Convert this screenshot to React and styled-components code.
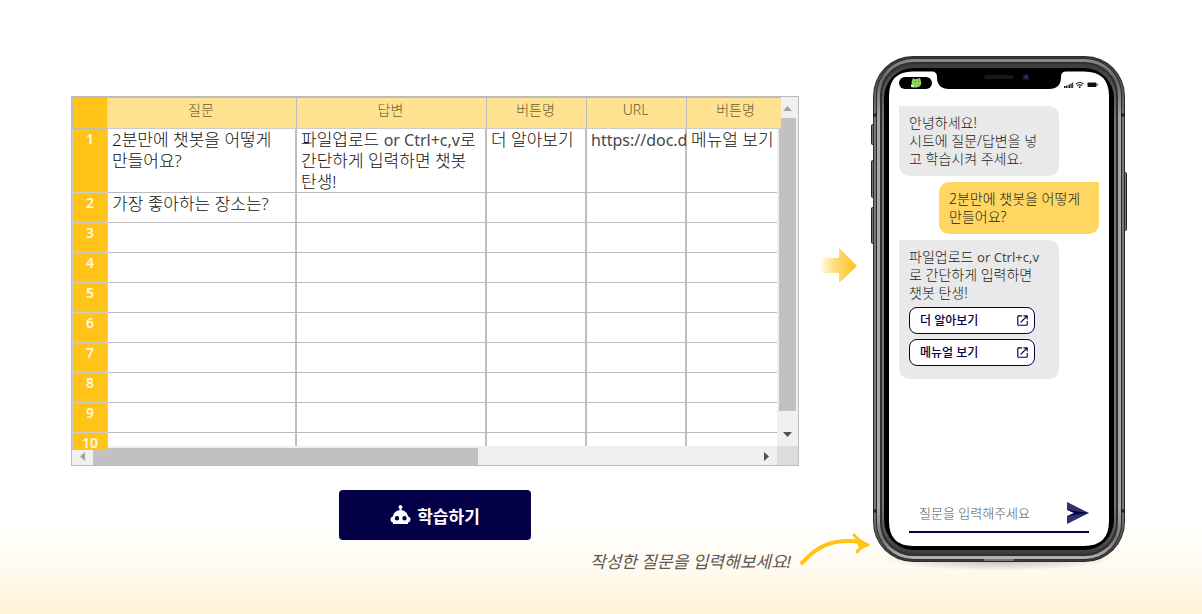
import React from "react";
import styled, { createGlobalStyle } from "styled-components";

const NAVY = "#030047";
const GOLD = "#ffc417";
const LINE = "#bcbcbc";

const GlobalStyle = createGlobalStyle`
  *, *::before, *::after { box-sizing: border-box; }
  body {
    margin: 0;
    font-family: "Noto Sans", "Noto Sans CJK KR", sans-serif;
    color: #373737;
  }
  button, input { font-family: inherit; }
`;

const Page = styled.main`
  min-height: 100vh;
  display: flex;
  align-items: flex-start;
  justify-content: center;
  padding: 54px 74px 32px 71px;
  background: linear-gradient(to top, #fff2d8 0, #fffaee 42px, #fff 90px);
`;

const Builder = styled.section`
  flex: 1;
  min-width: 0;
  max-width: 728px;
  display: flex;
  flex-direction: column;
  align-items: center;
  padding-top: 42px;
`;

const Sheet = styled.div`
  width: 100%;
  display: grid;
  grid-template-columns: minmax(0, 1fr) 17px;
  grid-template-rows: 353px 15px;
  border: 1px solid ${LINE};
`;

const Viewport = styled.div`
  overflow: hidden;
  background: #fff;
`;

const Table = styled.table`
  table-layout: fixed;
  width: 715px;
  border-collapse: separate;
  border-spacing: 0;
`;

const Col = styled.col`
  width: ${(p) => p.$w}px;
`;

const ColumnHead = styled.th`
  position: relative;
  z-index: 2;
  height: 32px;
  padding: 0 6px 6px 4px;
  border-top: 1px solid ${LINE};
  border-right: 1px solid ${LINE};
  border-bottom: 1px solid #ccc;
  background: #ffe28f;
  color: #6b5c36;
  font-size: 14px;
  font-weight: 300;
  line-height: 20px;
`;

const Corner = styled.td`
  height: 32px;
  border: 1px solid ${LINE};
  border-right-color: #f5d98a;
  background: ${GOLD};
`;

const RowHead = styled.th`
  position: relative;
  z-index: 2;
  padding: 0;
  vertical-align: top;
  border: 1px solid #ccc;
  border-top: 0;
  background: ${GOLD};
  color: #fff8e0;
  font-size: 14px;
  font-weight: 600;
  line-height: 20px;
`;

const Row = styled.tr`
  height: ${(p) => (p.$tall ? 64 : 30)}px;
`;

const Cell = styled.td`
  padding: 0 4px;
  vertical-align: top;
  border-right: 1px solid ${LINE};
  border-bottom: 1px solid ${LINE};
  box-shadow: inset -1px 0 #f0c040;
  font-size: 17px;
  font-weight: 300;
  color: #111;
  line-height: 21px;
  overflow: hidden;
  word-break: keep-all;
  white-space: ${(p) => (p.$wrap ? "normal" : "nowrap")};
`;

const Latin = styled.span`
  color: #484848;
  font-size: ${(p) => (p.$small ? 13 : 16)}px;
  font-weight: 400;
  line-height: 1;
`;

const VerticalTrack = styled.div`
  z-index: 1;
  margin: 0 0 4px -4px;
  padding: 0 2px;
  display: flex;
  flex-direction: column;
  justify-content: space-between;
  align-items: center;
  background: #f0f0f0;
`;

const VerticalThumb = styled.div`
  width: 17px;
  height: 293px;
  margin-bottom: auto;
  background: #c1c1c1;
`;

const HorizontalTrack = styled.div`
  z-index: 1;
  margin: -4px 4px 0 0;
  padding-top: 2px;
  display: flex;
  background: #f0f0f0;
`;

const HorizontalThumb = styled.div`
  width: 385px;
  margin-right: auto;
  background: #c1c1c1;
`;

const Stepper = styled.svg`
  flex: none;
  width: ${(p) => (p.$across ? 21 : 17)}px;
  height: ${(p) => (p.$across ? 17 : 21)}px;
  fill: ${(p) => (p.$off ? "#a3a3a3" : "#505050")};
`;

const TrackCorner = styled.div`
  z-index: 1;
  margin: -4px 0 0 -4px;
  background: #dcdcdc;
`;

const TrainButton = styled.button`
  display: flex;
  align-items: center;
  justify-content: center;
  gap: 6px;
  width: 192px;
  height: 50px;
  margin-top: 24px;
  border: 0;
  border-radius: 4px;
  background: ${NAVY};
  color: #fff;
  font-size: 17px;
  font-weight: 700;
`;

const Note = styled.p`
  align-self: flex-end;
  display: flex;
  align-items: center;
  gap: 8px;
  margin: -14px -72px 0 0;
  color: #5c5750;
  font-size: 17px;
  font-style: italic;
  line-height: 24px;
  white-space: nowrap;
`;

const NoteText = styled.span`
  padding-top: 24px;
`;

const FlowArrow = styled.svg`
  flex: none;
  margin: 194px 12px 0 21px;
`;

const Phone = styled.section`
  position: relative;
  flex: none;
  width: 258px;
  height: 528px;
`;

const Frame = styled.svg`
  position: absolute;
  inset: 0;
`;

const Screen = styled.div`
  position: relative;
  height: 492px;
  padding: 52px 29px 13px;
  display: flex;
  flex-direction: column;
  gap: 6px;
`;

const Bubble = styled.div`
  width: 160px;
  padding: ${(p) => (p.$actions ? "8px 10px 13px" : "8px 10px")};
  align-self: ${(p) => (p.$mine ? "flex-end" : "flex-start")};
  border-radius: ${(p) => (p.$mine ? "10px 0 10px 10px" : "0 10px 10px 10px")};
  background: ${(p) => (p.$mine ? "#ffd661" : "#e9e9e9")};
  color: #222;
  font-size: 14px;
  font-weight: 300;
  line-height: 18px;
`;

const Actions = styled.div`
  display: grid;
  gap: 5px;
  width: 126px;
  margin-top: 5px;
`;

const Action = styled.a`
  display: flex;
  align-items: center;
  justify-content: space-between;
  height: 27px;
  padding: 0 6px 0 10px;
  border: 1px solid ${NAVY};
  border-radius: 8px;
  background: #fff;
  color: ${NAVY};
  font-size: 12px;
  font-weight: 500;
  text-decoration: none;
`;

const Composer = styled.form`
  display: flex;
  align-items: center;
  justify-content: space-between;
  height: 38px;
  margin: auto 10px 0;
  border-bottom: 2px solid ${NAVY};
`;

const MessageInput = styled.input`
  flex: 1;
  min-width: 0;
  padding: 0 0 0 10px;
  border: 0;
  outline: 0;
  background: none;
  font-size: 13px;
  font-weight: 300;
  line-height: 20px;
  &::placeholder { color: #555; opacity: 1; }
`;

const SendButton = styled.button`
  display: flex;
  padding: 0;
  border: 0;
  background: none;
`;

const columns = ["질문", "답변", "버튼명", "URL", "버튼명"];
const records = [
  [
    "2분만에 챗봇을 어떻게 만들어요?",
    <>파일업로드 <Latin>or Ctrl+c,v</Latin>로 간단하게 입력하면 챗봇 탄생!</>,
    "더 알아보기",
    <Latin>https://doc.danbee.ai</Latin>,
    "메뉴얼 보기",
  ],
  ["가장 좋아하는 장소는?"],
];
const rowNumbers = [1, 2, 3, 4, 5, 6, 7, 8, 9, 10];

function PhoneFrame() {
  return (
    <Frame width="258" height="528" viewBox="0 0 258 528" aria-hidden="true">
      <defs>
        <linearGradient id="metal" x1="0" x2="0" y1="0" y2="1">
          <stop offset="0" stopColor="#8a8a8a" />
          <stop offset=".04" stopColor="#686868" />
          <stop offset=".12" stopColor="#a8a8a8" />
          <stop offset=".9" stopColor="#a8a8a8" />
          <stop offset=".96" stopColor="#777" />
          <stop offset="1" stopColor="#b5b5b5" />
        </linearGradient>
        <linearGradient id="inner" x1="0" x2="0" y1="0" y2="1">
          <stop offset="0" stopColor="#3c3c3c" />
          <stop offset=".12" stopColor="#767676" />
          <stop offset=".9" stopColor="#767676" />
          <stop offset="1" stopColor="#3c3c3c" />
        </linearGradient>
        <radialGradient id="shade">
          <stop offset="0" stopColor="#000" stopOpacity=".3" />
          <stop offset="1" stopColor="#000" stopOpacity="0" />
        </radialGradient>
      </defs>
      <ellipse cx="129" cy="504" rx="116" ry="13" fill="url(#shade)" />
      <g fill="#777" stroke="#222" strokeWidth="1">
        <rect x="1.5" y="70.5" width="4" height="20" rx="1" />
        <rect x="1.5" y="106.5" width="4" height="37" rx="1" />
        <rect x="1.5" y="153.5" width="4" height="36" rx="1" />
        <rect x="252.5" y="118.5" width="4" height="58" rx="1" />
      </g>
      <rect x="3" y="2" width="252" height="506" rx="40" fill="#2b2b2b" />
      <rect x="4" y="3" width="250" height="504" rx="39" fill="url(#inner)" />
      <rect x="6" y="4" width="246" height="502" rx="37" fill="#2b2b2b" />
      <rect x="7" y="5" width="244" height="500" rx="36" fill="url(#metal)" />
      <rect x="10" y="8" width="238" height="494" rx="33" fill="#303030" />
      <rect x="12" y="10" width="234" height="490" rx="32" fill="url(#inner)" />
      <rect x="14" y="14" width="230" height="482" rx="30" fill="#000" />
      <path d="M3 61h4M3 457h4M251 61h4M251 457h4" stroke="#222" strokeWidth="3" />
      <rect x="114" y="505" width="30" height="2" fill="#777" />
      <path
        d="M43 17.500H62Q67 17.500 67 23Q67 35 79 35H179Q191 35 191 23Q191 17.500 196 17.500H214Q239 17.500 239 42V467Q239 492 214 492H43Q19 492 19 467V42Q19 17.500 43 17.500Z"
        fill="#fff"
      />
      <rect x="114" y="21" width="30" height="4" rx="2" fill="#171717" />
      <circle cx="156" cy="23" r="3.500" fill="#10141c" />
      <circle cx="156" cy="23" r="1.700" fill="#1e4470" />
      <rect x="29" y="23" width="33" height="12" rx="6" fill="#000" />
      <path
        d="M42 26.500l1-2.500 2 1.200 3-.7 2-.5.600 2q1.500 3 0 5.500-2 2.500-5.600 2-2.500-.2-3.500-1.500-1-1 .300-1.800-.600-2 .200-3.700Z"
        fill="#8ed45a"
      />
      <path d="M41 30.500l3 1v2l-3-.500Z" fill="#c9f0ea" />
      <path d="M45 27.500h.800M48 27.500h.800" stroke="#30601e" />
      <g fill="#111">
        <rect x="194" y="32" width="1.500" height="2" />
        <rect x="196" y="31.500" width="1.500" height="2.500" />
        <rect x="198.500" y="30.500" width="1.500" height="3.500" />
        <rect x="200.500" y="29.500" width="1.200" height="4.500" />
        <rect x="202.200" y="28.500" width="1" height="5.500" />
        <rect x="217.500" y="28.500" width="9" height="4.500" rx=".8" />
        <rect x="227.200" y="30" width=".8" height="1.600" />
      </g>
      <path d="M206 30q4-3 7.500 0M207.300 31.700q2.300-1.800 4.800 0" fill="none" stroke="#111" strokeWidth="1.100" />
      <circle cx="209.700" cy="33.200" r=".9" fill="#111" />
    </Frame>
  );
}

function BotIcon() {
  return (
    <svg width="21" height="20" viewBox="0 0 21 20" aria-hidden="true">
      <path
        fill="#fff"
        fillRule="evenodd"
        d="M10.500 0a2 2 0 0 1 1 3.700V5.200C15 5.500 17.600 8 18 11.500c1.400.2 2.500 1.300 2.500 3 0 1.800-1 2.800-2.500 3V19H3v-1.500C1.500 17.300.500 16.300.500 14.500c0-1.700 1.100-2.800 2.500-3C3.400 8 6 5.500 9.500 5.200V3.700A2 2 0 0 1 10.500 0ZM7 11a2.200 2.200 0 1 0 0 4.400 2.200 2.200 0 0 0 0-4.400Zm7.500 0a2.200 2.200 0 1 0 0 4.400 2.200 2.200 0 0 0 0-4.400Z"
      />
    </svg>
  );
}

function OpenIcon() {
  return (
    <svg width="11" height="11" viewBox="0 0 24 24" fill="currentColor" aria-hidden="true">
      <path d="M21 21H3V3h8V.500H3A2.500 2.500 0 0 0 .500 3v18A2.500 2.500 0 0 0 3 23.500h18a2.500 2.500 0 0 0 2.500-2.500v-8H21v8ZM14 .500V3h5L7 15l2 2L21 5v5h2.500V.500H14Z" />
    </svg>
  );
}

function LinkButton({ children }) {
  return (
    <Action href="#">
      {children}
      <OpenIcon />
    </Action>
  );
}

function DataSheet() {
  return (
    <Sheet>
      <Viewport>
        <Table>
          <colgroup>
            {[36, 189, 190, 100, 100, 100].map((w, i) => (
              <Col key={i} $w={w} />
            ))}
          </colgroup>
          <thead>
            <tr>
              <Corner />
              {columns.map((name, i) => (
                <ColumnHead key={i} scope="col">{name}</ColumnHead>
              ))}
            </tr>
          </thead>
          <tbody>
            {rowNumbers.map((n) => (
              <Row key={n} $tall={n === 1}>
                <RowHead scope="row">{n}</RowHead>
                {columns.map((name, i) => (
                  <Cell key={i} $wrap={i < 2}>
                    {records[n - 1]?.[i]}
                  </Cell>
                ))}
              </Row>
            ))}
          </tbody>
        </Table>
      </Viewport>
      <VerticalTrack>
        <Stepper $off viewBox="0 0 17 21"><path d="M4 14h9L8.500 9Z" /></Stepper>
        <VerticalThumb />
        <Stepper viewBox="0 0 17 21"><path d="M4 7h9l-4.500 5Z" /></Stepper>
      </VerticalTrack>
      <HorizontalTrack>
        <Stepper $across $off viewBox="0 0 21 17"><path d="M13 4v9L8 8.500Z" /></Stepper>
        <HorizontalThumb />
        <Stepper $across viewBox="0 0 21 17"><path d="M8 4v9l5-4.500Z" /></Stepper>
      </HorizontalTrack>
      <TrackCorner />
    </Sheet>
  );
}

export default function App() {
  return (
    <>
      <GlobalStyle />
      <Page>
        <Builder>
          <DataSheet />
          <TrainButton type="button">
            <BotIcon />
            학습하기
          </TrainButton>
          <Note>
            <NoteText>작성한 질문을 입력해보세요!</NoteText>
            <svg width="72" height="34" viewBox="0 0 72 34" fill="none" stroke={GOLD} aria-hidden="true">
              <path d="M3 30C18 13 34 5 62 9" strokeWidth="4" strokeLinecap="round" />
              <path d="M55 2Q61 9 69 12Q61 14 58 19" strokeWidth="3" strokeLinecap="round" strokeLinejoin="round" />
              <path d="M58 8l11 4-9 2Z" fill={GOLD} strokeWidth="1" />
            </svg>
          </Note>
        </Builder>
        <FlowArrow width="38" height="36" viewBox="0 0 38 36" aria-hidden="true">
          <defs>
            <linearGradient id="fade">
              <stop offset="0" stopColor="#ffc417" stopOpacity="0" />
              <stop offset=".55" stopColor="#fdd467" />
              <stop offset="1" stopColor="#ffc20e" />
            </linearGradient>
          </defs>
          <path d="M0 10h19V0l18 18-18 17V25H0Z" fill="url(#fade)" />
        </FlowArrow>
        <Phone>
          <PhoneFrame />
          <Screen>
            <Bubble>
              안녕하세요!
              <br />
              시트에 질문/답변을 넣고 학습시켜 주세요.
            </Bubble>
            <Bubble $mine>2분만에 챗봇을 어떻게 만들어요?</Bubble>
            <Bubble $actions>
              파일업로드 <Latin $small>or Ctrl+c,v</Latin>
              <br />
              로 간단하게 입력하면
              <br />
              챗봇 탄생!
              <Actions>
                <LinkButton>더 알아보기</LinkButton>
                <LinkButton>메뉴얼 보기</LinkButton>
              </Actions>
            </Bubble>
            <Composer onSubmit={(e) => e.preventDefault()}>
              <MessageInput aria-label="질문" placeholder="질문을 입력해주세요" />
              <SendButton type="submit" aria-label="보내기">
                <svg width="23" height="24" viewBox="0 0 23 24" aria-hidden="true">
                  <path d="M1 1l22 11L1 23l0-8 9-3L1 9Z" fill="#33306c" />
                  <path d="M1 9l22 3-22 3 7-3Z" fill={NAVY} />
                </svg>
              </SendButton>
            </Composer>
          </Screen>
        </Phone>
      </Page>
    </>
  );
}
